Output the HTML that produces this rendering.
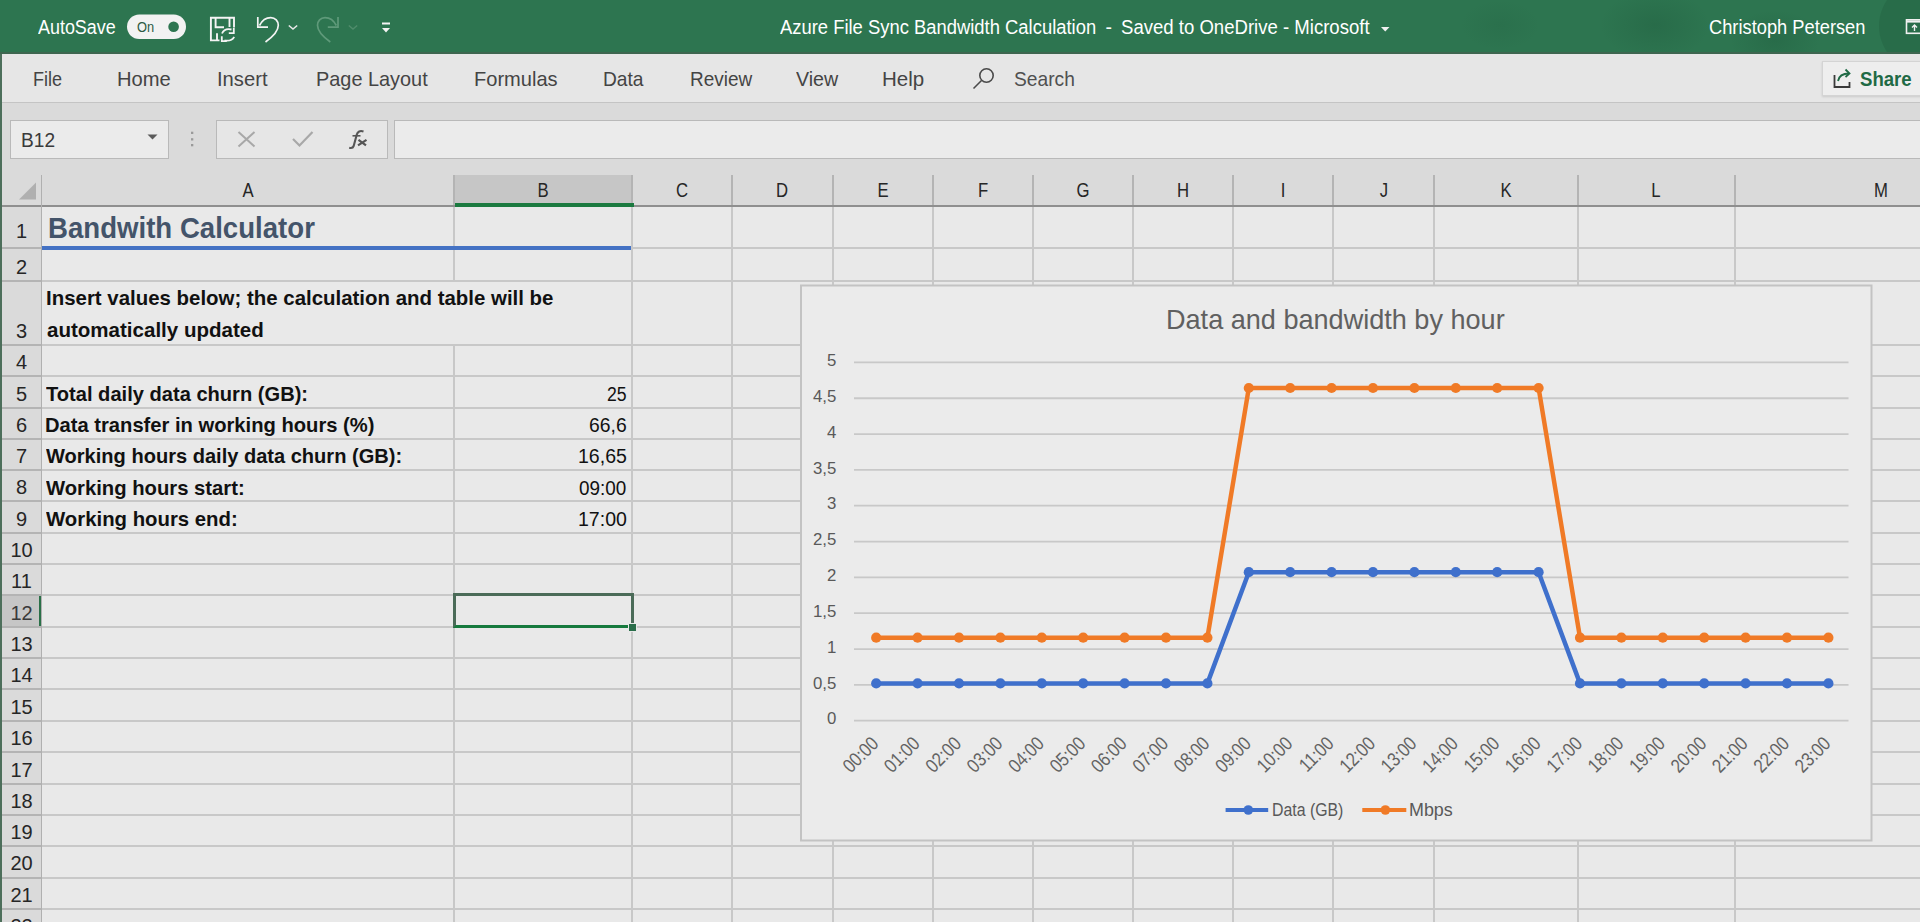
<!DOCTYPE html><html><head><meta charset="utf-8"><style>
html,body{margin:0;padding:0;}
body{width:1920px;height:922px;overflow:hidden;position:relative;background:#e9e9e9;font-family:"Liberation Sans",sans-serif;}
.a{position:absolute;}
.t{position:absolute;white-space:pre;line-height:1;transform-origin:0 0;}
</style></head><body>
<div class="a" style="left:0;top:0;width:1920px;height:53px;background:#2d7550"></div><div class="a" style="left:1440px;top:0;width:480px;height:52px;overflow:hidden"><div class="a" style="left:160px;top:-10px;width:110px;height:70px;border-radius:50%;background:radial-gradient(closest-side,rgba(20,70,45,0.2),rgba(20,70,45,0))"></div><div class="a" style="left:20px;top:0px;width:80px;height:50px;border-radius:50%;background:radial-gradient(closest-side,rgba(20,70,45,0.1),rgba(20,70,45,0))"></div><div class="a" style="left:290px;top:10px;width:90px;height:60px;border-radius:50%;background:radial-gradient(closest-side,rgba(20,70,45,0.2),rgba(20,70,45,0))"></div><div class="a" style="left:439px;top:-20px;width:92px;height:92px;border-radius:50%;background:rgba(20,60,40,0.16)"></div></div><div class="a" style="left:0;top:52px;width:1920px;height:2px;background:#3e6650"></div><div class="a" style="left:0;top:54px;width:2px;height:868px;background:#4d6f5b"></div><div class="a" style="left:2px;top:54px;width:1918px;height:48px;background:#e6e6e6"></div><div class="a" style="left:2px;top:102px;width:1918px;height:73px;background:#dadada"></div><div class="a" style="left:2px;top:102px;width:1918px;height:1px;background:#c4c4c4"></div><div class="a" style="left:10px;top:120px;width:157px;height:37px;background:#ebebeb;border:1px solid #b9b9b9"></div><div class="a" style="left:216px;top:120px;width:170px;height:37px;background:#e6e6e6;border:1px solid #b9b9b9"></div><div class="a" style="left:394px;top:120px;width:1530px;height:37px;background:#ebebeb;border:1px solid #b9b9b9"></div><div class="a" style="left:1822px;top:61px;width:110px;height:33px;background:#eeeeee;border:1px solid #d4d4d4;box-shadow:0 1px 2px rgba(0,0,0,0.12)"></div><div class="a" style="left:2px;top:175px;width:1918px;height:30px;background:#dadada"></div><div class="a" style="left:455px;top:175px;width:176px;height:30px;background:#c6c6c6"></div><div class="a" style="left:2px;top:207px;width:39px;height:715px;background:#dadada"></div><div class="a" style="left:2px;top:596px;width:39px;height:30px;background:#c6c6c6"></div><div class="a" style="left:39px;top:596px;width:3px;height:31px;background:#2a7048"></div><div class="a" style="left:453px;top:175px;width:2px;height:30px;background:#b4b4b4"></div><div class="a" style="left:631px;top:175px;width:2px;height:30px;background:#b4b4b4"></div><div class="a" style="left:731px;top:175px;width:2px;height:30px;background:#b4b4b4"></div><div class="a" style="left:832px;top:175px;width:2px;height:30px;background:#b4b4b4"></div><div class="a" style="left:932px;top:175px;width:2px;height:30px;background:#b4b4b4"></div><div class="a" style="left:1032px;top:175px;width:2px;height:30px;background:#b4b4b4"></div><div class="a" style="left:1132px;top:175px;width:2px;height:30px;background:#b4b4b4"></div><div class="a" style="left:1232px;top:175px;width:2px;height:30px;background:#b4b4b4"></div><div class="a" style="left:1332px;top:175px;width:2px;height:30px;background:#b4b4b4"></div><div class="a" style="left:1433px;top:175px;width:2px;height:30px;background:#b4b4b4"></div><div class="a" style="left:1577px;top:175px;width:2px;height:30px;background:#b4b4b4"></div><div class="a" style="left:1734px;top:175px;width:2px;height:30px;background:#b4b4b4"></div><div class="a" style="left:2px;top:205px;width:1918px;height:2px;background:#8f8f8f"></div><div class="a" style="left:455px;top:203px;width:179px;height:4px;background:#1b7a40"></div><div class="a" style="left:41px;top:175px;width:1px;height:747px;background:#b0b0b0"></div><div class="a" style="left:453px;top:207px;width:2px;height:715px;background:#c8c8c8"></div><div class="a" style="left:631px;top:207px;width:2px;height:715px;background:#c8c8c8"></div><div class="a" style="left:731px;top:207px;width:2px;height:715px;background:#c8c8c8"></div><div class="a" style="left:832px;top:207px;width:2px;height:715px;background:#c8c8c8"></div><div class="a" style="left:932px;top:207px;width:2px;height:715px;background:#c8c8c8"></div><div class="a" style="left:1032px;top:207px;width:2px;height:715px;background:#c8c8c8"></div><div class="a" style="left:1132px;top:207px;width:2px;height:715px;background:#c8c8c8"></div><div class="a" style="left:1232px;top:207px;width:2px;height:715px;background:#c8c8c8"></div><div class="a" style="left:1332px;top:207px;width:2px;height:715px;background:#c8c8c8"></div><div class="a" style="left:1433px;top:207px;width:2px;height:715px;background:#c8c8c8"></div><div class="a" style="left:1577px;top:207px;width:2px;height:715px;background:#c8c8c8"></div><div class="a" style="left:1734px;top:207px;width:2px;height:715px;background:#c8c8c8"></div><div class="a" style="left:2px;top:247px;width:39px;height:2px;background:#b4b4b4"></div><div class="a" style="left:631px;top:247px;width:1289px;height:2px;background:#c8c8c8"></div><div class="a" style="left:2px;top:280px;width:39px;height:2px;background:#b4b4b4"></div><div class="a" style="left:42px;top:280px;width:1878px;height:2px;background:#c8c8c8"></div><div class="a" style="left:2px;top:344px;width:39px;height:2px;background:#b4b4b4"></div><div class="a" style="left:42px;top:344px;width:1878px;height:2px;background:#c8c8c8"></div><div class="a" style="left:2px;top:375px;width:39px;height:2px;background:#b4b4b4"></div><div class="a" style="left:42px;top:375px;width:1878px;height:2px;background:#c8c8c8"></div><div class="a" style="left:2px;top:407px;width:39px;height:2px;background:#b4b4b4"></div><div class="a" style="left:42px;top:407px;width:1878px;height:2px;background:#c8c8c8"></div><div class="a" style="left:2px;top:438px;width:39px;height:2px;background:#b4b4b4"></div><div class="a" style="left:42px;top:438px;width:1878px;height:2px;background:#c8c8c8"></div><div class="a" style="left:2px;top:469px;width:39px;height:2px;background:#b4b4b4"></div><div class="a" style="left:42px;top:469px;width:1878px;height:2px;background:#c8c8c8"></div><div class="a" style="left:2px;top:500px;width:39px;height:2px;background:#b4b4b4"></div><div class="a" style="left:42px;top:500px;width:1878px;height:2px;background:#c8c8c8"></div><div class="a" style="left:2px;top:532px;width:39px;height:2px;background:#b4b4b4"></div><div class="a" style="left:42px;top:532px;width:1878px;height:2px;background:#c8c8c8"></div><div class="a" style="left:2px;top:563px;width:39px;height:2px;background:#b4b4b4"></div><div class="a" style="left:42px;top:563px;width:1878px;height:2px;background:#c8c8c8"></div><div class="a" style="left:2px;top:594px;width:39px;height:2px;background:#b4b4b4"></div><div class="a" style="left:42px;top:594px;width:1878px;height:2px;background:#c8c8c8"></div><div class="a" style="left:2px;top:626px;width:39px;height:2px;background:#b4b4b4"></div><div class="a" style="left:42px;top:626px;width:1878px;height:2px;background:#c8c8c8"></div><div class="a" style="left:2px;top:657px;width:39px;height:2px;background:#b4b4b4"></div><div class="a" style="left:42px;top:657px;width:1878px;height:2px;background:#c8c8c8"></div><div class="a" style="left:2px;top:688px;width:39px;height:2px;background:#b4b4b4"></div><div class="a" style="left:42px;top:688px;width:1878px;height:2px;background:#c8c8c8"></div><div class="a" style="left:2px;top:720px;width:39px;height:2px;background:#b4b4b4"></div><div class="a" style="left:42px;top:720px;width:1878px;height:2px;background:#c8c8c8"></div><div class="a" style="left:2px;top:751px;width:39px;height:2px;background:#b4b4b4"></div><div class="a" style="left:42px;top:751px;width:1878px;height:2px;background:#c8c8c8"></div><div class="a" style="left:2px;top:783px;width:39px;height:2px;background:#b4b4b4"></div><div class="a" style="left:42px;top:783px;width:1878px;height:2px;background:#c8c8c8"></div><div class="a" style="left:2px;top:814px;width:39px;height:2px;background:#b4b4b4"></div><div class="a" style="left:42px;top:814px;width:1878px;height:2px;background:#c8c8c8"></div><div class="a" style="left:2px;top:845px;width:39px;height:2px;background:#b4b4b4"></div><div class="a" style="left:42px;top:845px;width:1878px;height:2px;background:#c8c8c8"></div><div class="a" style="left:2px;top:877px;width:39px;height:2px;background:#b4b4b4"></div><div class="a" style="left:42px;top:877px;width:1878px;height:2px;background:#c8c8c8"></div><div class="a" style="left:2px;top:908px;width:39px;height:2px;background:#b4b4b4"></div><div class="a" style="left:42px;top:908px;width:1878px;height:2px;background:#c8c8c8"></div><div class="a" style="left:2px;top:939px;width:39px;height:2px;background:#b4b4b4"></div><div class="a" style="left:42px;top:939px;width:1878px;height:2px;background:#c8c8c8"></div><div class="a" style="left:453px;top:282px;width:2px;height:62px;background:#e9e9e9"></div><div class="a" style="left:42px;top:246px;width:589px;height:4px;background:#4472c4"></div><div class="a" style="left:453px;top:593px;width:175px;height:29px;border:3px solid #4b6b58;border-bottom-color:#177a3e"></div><div class="a" style="left:628px;top:623px;width:7px;height:7px;background:#2a6e4a;border:1px solid #e9e9e9"></div><div class="a" style="left:208.2px;top:181px;width:80px;text-align:center;font-size:19.9px;line-height:1;color:#262626;transform:scaleX(0.84)">A</div><div class="a" style="left:503.2px;top:181px;width:80px;text-align:center;font-size:19.9px;line-height:1;color:#262626;transform:scaleX(0.84)">B</div><div class="a" style="left:642.0px;top:181px;width:80px;text-align:center;font-size:19.9px;line-height:1;color:#262626;transform:scaleX(0.84)">C</div><div class="a" style="left:742.2px;top:181px;width:80px;text-align:center;font-size:19.9px;line-height:1;color:#262626;transform:scaleX(0.84)">D</div><div class="a" style="left:842.6px;top:181px;width:80px;text-align:center;font-size:19.9px;line-height:1;color:#262626;transform:scaleX(0.84)">E</div><div class="a" style="left:942.6px;top:181px;width:80px;text-align:center;font-size:19.9px;line-height:1;color:#262626;transform:scaleX(0.84)">F</div><div class="a" style="left:1042.7px;top:181px;width:80px;text-align:center;font-size:19.9px;line-height:1;color:#262626;transform:scaleX(0.84)">G</div><div class="a" style="left:1142.9px;top:181px;width:80px;text-align:center;font-size:19.9px;line-height:1;color:#262626;transform:scaleX(0.84)">H</div><div class="a" style="left:1243.2px;top:181px;width:80px;text-align:center;font-size:19.9px;line-height:1;color:#262626;transform:scaleX(0.84)">I</div><div class="a" style="left:1343.5px;top:181px;width:80px;text-align:center;font-size:19.9px;line-height:1;color:#262626;transform:scaleX(0.84)">J</div><div class="a" style="left:1465.9px;top:181px;width:80px;text-align:center;font-size:19.9px;line-height:1;color:#262626;transform:scaleX(0.84)">K</div><div class="a" style="left:1616.3px;top:181px;width:80px;text-align:center;font-size:19.9px;line-height:1;color:#262626;transform:scaleX(0.84)">L</div><div class="a" style="left:1840.8px;top:181px;width:80px;text-align:center;font-size:19.9px;line-height:1;color:#262626;transform:scaleX(0.84)">M</div><div class="a" style="left:1px;top:221px;width:41px;text-align:center;font-size:20.0px;line-height:1;color:#262626">1</div><div class="a" style="left:1px;top:257px;width:41px;text-align:center;font-size:20.0px;line-height:1;color:#262626">2</div><div class="a" style="left:1px;top:321px;width:41px;text-align:center;font-size:20.0px;line-height:1;color:#262626">3</div><div class="a" style="left:1px;top:352px;width:41px;text-align:center;font-size:20.0px;line-height:1;color:#262626">4</div><div class="a" style="left:1px;top:384px;width:41px;text-align:center;font-size:20.0px;line-height:1;color:#262626">5</div><div class="a" style="left:1px;top:415px;width:41px;text-align:center;font-size:20.0px;line-height:1;color:#262626">6</div><div class="a" style="left:1px;top:446px;width:41px;text-align:center;font-size:20.0px;line-height:1;color:#262626">7</div><div class="a" style="left:1px;top:477px;width:41px;text-align:center;font-size:20.0px;line-height:1;color:#262626">8</div><div class="a" style="left:1px;top:509px;width:41px;text-align:center;font-size:20.0px;line-height:1;color:#262626">9</div><div class="a" style="left:1px;top:540px;width:41px;text-align:center;font-size:20.0px;line-height:1;color:#262626">10</div><div class="a" style="left:1px;top:571px;width:41px;text-align:center;font-size:20.0px;line-height:1;color:#262626">11</div><div class="a" style="left:1px;top:603px;width:41px;text-align:center;font-size:20.0px;line-height:1;color:#3a3a3a">12</div><div class="a" style="left:1px;top:634px;width:41px;text-align:center;font-size:20.0px;line-height:1;color:#262626">13</div><div class="a" style="left:1px;top:665px;width:41px;text-align:center;font-size:20.0px;line-height:1;color:#262626">14</div><div class="a" style="left:1px;top:697px;width:41px;text-align:center;font-size:20.0px;line-height:1;color:#262626">15</div><div class="a" style="left:1px;top:728px;width:41px;text-align:center;font-size:20.0px;line-height:1;color:#262626">16</div><div class="a" style="left:1px;top:760px;width:41px;text-align:center;font-size:20.0px;line-height:1;color:#262626">17</div><div class="a" style="left:1px;top:791px;width:41px;text-align:center;font-size:20.0px;line-height:1;color:#262626">18</div><div class="a" style="left:1px;top:822px;width:41px;text-align:center;font-size:20.0px;line-height:1;color:#262626">19</div><div class="a" style="left:1px;top:853px;width:41px;text-align:center;font-size:20.0px;line-height:1;color:#262626">20</div><div class="a" style="left:1px;top:885px;width:41px;text-align:center;font-size:20.0px;line-height:1;color:#262626">21</div><div class="a" style="left:1px;top:916px;width:41px;text-align:center;font-size:20.0px;line-height:1;color:#262626">22</div><svg class="a" style="left:0;top:0" width="1920" height="922" viewBox="0 0 1920 922"><rect x="801" y="285.5" width="1070.5" height="555" fill="#ebebeb" stroke="#c3c3c3" stroke-width="2"/><line x1="854" y1="720.70" x2="1848.5" y2="720.70" stroke="#c8c8c8" stroke-width="1.8"/><line x1="854" y1="684.87" x2="1848.5" y2="684.87" stroke="#c8c8c8" stroke-width="1.8"/><line x1="854" y1="649.04" x2="1848.5" y2="649.04" stroke="#c8c8c8" stroke-width="1.8"/><line x1="854" y1="613.21" x2="1848.5" y2="613.21" stroke="#c8c8c8" stroke-width="1.8"/><line x1="854" y1="577.38" x2="1848.5" y2="577.38" stroke="#c8c8c8" stroke-width="1.8"/><line x1="854" y1="541.55" x2="1848.5" y2="541.55" stroke="#c8c8c8" stroke-width="1.8"/><line x1="854" y1="505.72" x2="1848.5" y2="505.72" stroke="#c8c8c8" stroke-width="1.8"/><line x1="854" y1="469.89" x2="1848.5" y2="469.89" stroke="#c8c8c8" stroke-width="1.8"/><line x1="854" y1="434.06" x2="1848.5" y2="434.06" stroke="#c8c8c8" stroke-width="1.8"/><line x1="854" y1="398.23" x2="1848.5" y2="398.23" stroke="#c8c8c8" stroke-width="1.8"/><line x1="854" y1="362.40" x2="1848.5" y2="362.40" stroke="#c8c8c8" stroke-width="1.8"/><polyline points="876.2,683.4 917.6,683.4 959.0,683.4 1000.4,683.4 1041.8,683.4 1083.2,683.4 1124.6,683.4 1166.0,683.4 1207.4,683.4 1248.8,572.2 1290.2,572.2 1331.6,572.2 1373.0,572.2 1414.4,572.2 1455.8,572.2 1497.2,572.2 1538.6,572.2 1580.0,683.4 1621.4,683.4 1662.8,683.4 1704.2,683.4 1745.6,683.4 1787.0,683.4 1828.4,683.4" fill="none" stroke="#3f70cc" stroke-width="4.5" stroke-linejoin="round"/><circle cx="876.2" cy="683.4" r="5.1" fill="#3f70cc"/><circle cx="917.6" cy="683.4" r="5.1" fill="#3f70cc"/><circle cx="959.0" cy="683.4" r="5.1" fill="#3f70cc"/><circle cx="1000.4" cy="683.4" r="5.1" fill="#3f70cc"/><circle cx="1041.8" cy="683.4" r="5.1" fill="#3f70cc"/><circle cx="1083.2" cy="683.4" r="5.1" fill="#3f70cc"/><circle cx="1124.6" cy="683.4" r="5.1" fill="#3f70cc"/><circle cx="1166.0" cy="683.4" r="5.1" fill="#3f70cc"/><circle cx="1207.4" cy="683.4" r="5.1" fill="#3f70cc"/><circle cx="1248.8" cy="572.2" r="5.1" fill="#3f70cc"/><circle cx="1290.2" cy="572.2" r="5.1" fill="#3f70cc"/><circle cx="1331.6" cy="572.2" r="5.1" fill="#3f70cc"/><circle cx="1373.0" cy="572.2" r="5.1" fill="#3f70cc"/><circle cx="1414.4" cy="572.2" r="5.1" fill="#3f70cc"/><circle cx="1455.8" cy="572.2" r="5.1" fill="#3f70cc"/><circle cx="1497.2" cy="572.2" r="5.1" fill="#3f70cc"/><circle cx="1538.6" cy="572.2" r="5.1" fill="#3f70cc"/><circle cx="1580.0" cy="683.4" r="5.1" fill="#3f70cc"/><circle cx="1621.4" cy="683.4" r="5.1" fill="#3f70cc"/><circle cx="1662.8" cy="683.4" r="5.1" fill="#3f70cc"/><circle cx="1704.2" cy="683.4" r="5.1" fill="#3f70cc"/><circle cx="1745.6" cy="683.4" r="5.1" fill="#3f70cc"/><circle cx="1787.0" cy="683.4" r="5.1" fill="#3f70cc"/><circle cx="1828.4" cy="683.4" r="5.1" fill="#3f70cc"/><polyline points="876.2,637.7 917.6,637.7 959.0,637.7 1000.4,637.7 1041.8,637.7 1083.2,637.7 1124.6,637.7 1166.0,637.7 1207.4,637.7 1248.8,388.0 1290.2,388.0 1331.6,388.0 1373.0,388.0 1414.4,388.0 1455.8,388.0 1497.2,388.0 1538.6,388.0 1580.0,637.7 1621.4,637.7 1662.8,637.7 1704.2,637.7 1745.6,637.7 1787.0,637.7 1828.4,637.7" fill="none" stroke="#f07a26" stroke-width="4.5" stroke-linejoin="round"/><circle cx="876.2" cy="637.7" r="5.1" fill="#f07a26"/><circle cx="917.6" cy="637.7" r="5.1" fill="#f07a26"/><circle cx="959.0" cy="637.7" r="5.1" fill="#f07a26"/><circle cx="1000.4" cy="637.7" r="5.1" fill="#f07a26"/><circle cx="1041.8" cy="637.7" r="5.1" fill="#f07a26"/><circle cx="1083.2" cy="637.7" r="5.1" fill="#f07a26"/><circle cx="1124.6" cy="637.7" r="5.1" fill="#f07a26"/><circle cx="1166.0" cy="637.7" r="5.1" fill="#f07a26"/><circle cx="1207.4" cy="637.7" r="5.1" fill="#f07a26"/><circle cx="1248.8" cy="388.0" r="5.1" fill="#f07a26"/><circle cx="1290.2" cy="388.0" r="5.1" fill="#f07a26"/><circle cx="1331.6" cy="388.0" r="5.1" fill="#f07a26"/><circle cx="1373.0" cy="388.0" r="5.1" fill="#f07a26"/><circle cx="1414.4" cy="388.0" r="5.1" fill="#f07a26"/><circle cx="1455.8" cy="388.0" r="5.1" fill="#f07a26"/><circle cx="1497.2" cy="388.0" r="5.1" fill="#f07a26"/><circle cx="1538.6" cy="388.0" r="5.1" fill="#f07a26"/><circle cx="1580.0" cy="637.7" r="5.1" fill="#f07a26"/><circle cx="1621.4" cy="637.7" r="5.1" fill="#f07a26"/><circle cx="1662.8" cy="637.7" r="5.1" fill="#f07a26"/><circle cx="1704.2" cy="637.7" r="5.1" fill="#f07a26"/><circle cx="1745.6" cy="637.7" r="5.1" fill="#f07a26"/><circle cx="1787.0" cy="637.7" r="5.1" fill="#f07a26"/><circle cx="1828.4" cy="637.7" r="5.1" fill="#f07a26"/><line x1="1225.6" y1="810" x2="1268.2" y2="810" stroke="#3f70cc" stroke-width="4"/><circle cx="1248.3" cy="810" r="4.8" fill="#3f70cc"/><line x1="1362.3" y1="810" x2="1406.3" y2="810" stroke="#f07a26" stroke-width="4"/><circle cx="1385.4" cy="810" r="4.8" fill="#f07a26"/><text x="836.3" y="724.3" text-anchor="end" font-family="Liberation Sans" font-size="16.8" fill="#595959">0</text><text x="836.3" y="688.5" text-anchor="end" font-family="Liberation Sans" font-size="16.8" fill="#595959">0,5</text><text x="836.3" y="652.6" text-anchor="end" font-family="Liberation Sans" font-size="16.8" fill="#595959">1</text><text x="836.3" y="616.8" text-anchor="end" font-family="Liberation Sans" font-size="16.8" fill="#595959">1,5</text><text x="836.3" y="581.0" text-anchor="end" font-family="Liberation Sans" font-size="16.8" fill="#595959">2</text><text x="836.3" y="545.2" text-anchor="end" font-family="Liberation Sans" font-size="16.8" fill="#595959">2,5</text><text x="836.3" y="509.3" text-anchor="end" font-family="Liberation Sans" font-size="16.8" fill="#595959">3</text><text x="836.3" y="473.5" text-anchor="end" font-family="Liberation Sans" font-size="16.8" fill="#595959">3,5</text><text x="836.3" y="437.7" text-anchor="end" font-family="Liberation Sans" font-size="16.8" fill="#595959">4</text><text x="836.3" y="401.8" text-anchor="end" font-family="Liberation Sans" font-size="16.8" fill="#595959">4,5</text><text x="836.3" y="366.0" text-anchor="end" font-family="Liberation Sans" font-size="16.8" fill="#595959">5</text><text transform="translate(879.6,744.8) rotate(-45) scale(0.84,1)" text-anchor="end" font-family="Liberation Sans" font-size="19.5" fill="#636363">00:00</text><text transform="translate(921.0,744.8) rotate(-45) scale(0.84,1)" text-anchor="end" font-family="Liberation Sans" font-size="19.5" fill="#636363">01:00</text><text transform="translate(962.4,744.8) rotate(-45) scale(0.84,1)" text-anchor="end" font-family="Liberation Sans" font-size="19.5" fill="#636363">02:00</text><text transform="translate(1003.8,744.8) rotate(-45) scale(0.84,1)" text-anchor="end" font-family="Liberation Sans" font-size="19.5" fill="#636363">03:00</text><text transform="translate(1045.2,744.8) rotate(-45) scale(0.84,1)" text-anchor="end" font-family="Liberation Sans" font-size="19.5" fill="#636363">04:00</text><text transform="translate(1086.6,744.8) rotate(-45) scale(0.84,1)" text-anchor="end" font-family="Liberation Sans" font-size="19.5" fill="#636363">05:00</text><text transform="translate(1128.0,744.8) rotate(-45) scale(0.84,1)" text-anchor="end" font-family="Liberation Sans" font-size="19.5" fill="#636363">06:00</text><text transform="translate(1169.4,744.8) rotate(-45) scale(0.84,1)" text-anchor="end" font-family="Liberation Sans" font-size="19.5" fill="#636363">07:00</text><text transform="translate(1210.8,744.8) rotate(-45) scale(0.84,1)" text-anchor="end" font-family="Liberation Sans" font-size="19.5" fill="#636363">08:00</text><text transform="translate(1252.2,744.8) rotate(-45) scale(0.84,1)" text-anchor="end" font-family="Liberation Sans" font-size="19.5" fill="#636363">09:00</text><text transform="translate(1293.6,744.8) rotate(-45) scale(0.84,1)" text-anchor="end" font-family="Liberation Sans" font-size="19.5" fill="#636363">10:00</text><text transform="translate(1335.0,744.8) rotate(-45) scale(0.84,1)" text-anchor="end" font-family="Liberation Sans" font-size="19.5" fill="#636363">11:00</text><text transform="translate(1376.4,744.8) rotate(-45) scale(0.84,1)" text-anchor="end" font-family="Liberation Sans" font-size="19.5" fill="#636363">12:00</text><text transform="translate(1417.8,744.8) rotate(-45) scale(0.84,1)" text-anchor="end" font-family="Liberation Sans" font-size="19.5" fill="#636363">13:00</text><text transform="translate(1459.2,744.8) rotate(-45) scale(0.84,1)" text-anchor="end" font-family="Liberation Sans" font-size="19.5" fill="#636363">14:00</text><text transform="translate(1500.6,744.8) rotate(-45) scale(0.84,1)" text-anchor="end" font-family="Liberation Sans" font-size="19.5" fill="#636363">15:00</text><text transform="translate(1542.0,744.8) rotate(-45) scale(0.84,1)" text-anchor="end" font-family="Liberation Sans" font-size="19.5" fill="#636363">16:00</text><text transform="translate(1583.4,744.8) rotate(-45) scale(0.84,1)" text-anchor="end" font-family="Liberation Sans" font-size="19.5" fill="#636363">17:00</text><text transform="translate(1624.8,744.8) rotate(-45) scale(0.84,1)" text-anchor="end" font-family="Liberation Sans" font-size="19.5" fill="#636363">18:00</text><text transform="translate(1666.2,744.8) rotate(-45) scale(0.84,1)" text-anchor="end" font-family="Liberation Sans" font-size="19.5" fill="#636363">19:00</text><text transform="translate(1707.6,744.8) rotate(-45) scale(0.84,1)" text-anchor="end" font-family="Liberation Sans" font-size="19.5" fill="#636363">20:00</text><text transform="translate(1749.0,744.8) rotate(-45) scale(0.84,1)" text-anchor="end" font-family="Liberation Sans" font-size="19.5" fill="#636363">21:00</text><text transform="translate(1790.4,744.8) rotate(-45) scale(0.84,1)" text-anchor="end" font-family="Liberation Sans" font-size="19.5" fill="#636363">22:00</text><text transform="translate(1831.8,744.8) rotate(-45) scale(0.84,1)" text-anchor="end" font-family="Liberation Sans" font-size="19.5" fill="#636363">23:00</text></svg><svg class="a" style="left:0;top:0" width="1920" height="210" viewBox="0 0 1920 210"><rect x="127" y="14.5" width="59" height="24.5" rx="12.25" fill="#f2f2f2"/><circle cx="173.6" cy="26.8" r="5.3" fill="#2d7550"/><text x="137" y="32" font-family="Liberation Sans" font-size="14" fill="#2d5a44" transform="translate(136.5,0) scale(0.92,1) translate(-136.5,0)">On</text><g fill="none" stroke="#f4f4f4" stroke-width="1.9"><path d="M219.5 40.4 H210.9 V17.8 H234 V27.5"/><path d="M215.6 17.8 V27.2 H224"/><path d="M229.5 17.8 V27"/><path d="M217 33.2 V40.4"/></g><g fill="none" stroke="#f4f4f4" stroke-width="1.8"><path d="M222 33.5 C223.5 30 227 28.5 231.5 29.5"/><path d="M233.8 28 V33.2 H228.8"/><path d="M234.2 36.8 C232.5 40 229 41.2 224.5 40.5"/><path d="M221.8 36.2 V41.2 H226.8"/></g><g fill="none" stroke="#f4f4f4" stroke-width="1.7"><path d="M257.8 17 V27.2 H268"/><path d="M259.5 25.5 C262 20.5 266 17.6 270.8 17.6 C275.3 17.6 278.3 21.3 278.3 25.3 C278.3 31 272.5 37 265.5 42"/></g><path d="M288.8 25.5 L293 29 L297.2 25.5" fill="none" stroke="#e8e8e8" stroke-width="1.6"/><g fill="none" stroke="#5f9a7a" stroke-width="1.7"><path d="M338 17 V27.2 H327.8"/><path d="M336.3 25.5 C333.8 20.5 329.8 17.6 325 17.6 C320.5 17.6 317.5 21.3 317.5 25.3 C317.5 31 323.3 37 330.3 42"/></g><path d="M348.8 25.5 L353 29 L357.2 25.5" fill="none" stroke="#4f8c6b" stroke-width="1.5"/><rect x="382" y="22.5" width="8" height="2" fill="#f4f4f4"/><path d="M382 28 H390 L386 32.5 Z" fill="#f4f4f4"/><path d="M1381 27 H1389.5 L1385.25 31.5 Z" fill="#f0f0f0"/><rect x="1906.5" y="19.8" width="16" height="13.5" fill="none" stroke="#f0f0f0" stroke-width="1.6"/><path d="M1906 21.5 H1922" stroke="#f0f0f0" stroke-width="2.2"/><path d="M1914.5 31 V25 M1912 27.5 L1914.5 25 L1917 27.5" fill="none" stroke="#f0f0f0" stroke-width="1.4"/><g fill="none" stroke="#4a4a4a" stroke-width="1.6"><circle cx="986.5" cy="75.5" r="6.7"/><path d="M981.5 80.5 L973.5 88.5"/></g><g fill="none" stroke="#3a3a3a" stroke-width="1.8"><path d="M1834.5 75 V87 H1849.5 V82"/></g><g fill="none" stroke="#1f6a45" stroke-width="1.8"><path d="M1838 81 C1839 75.5 1843 73.5 1849 73.5"/><path d="M1845.5 69.5 L1849.5 73.5 L1845.5 77"/></g><path d="M147.5 134.5 H157.5 L152.5 139.5 Z" fill="#5a5a5a"/><rect x="191" y="131.7" width="2.3" height="2.3" fill="#9a9a9a"/><rect x="191" y="138.2" width="2.3" height="2.3" fill="#9a9a9a"/><rect x="191" y="144.0" width="2.3" height="2.3" fill="#9a9a9a"/><path d="M238.5 132 L254.5 146.5 M254.5 132 L238.5 146.5" stroke="#a8a8a8" stroke-width="2"/><path d="M293 139 L299.5 145.5 L312.5 132" fill="none" stroke="#a8a8a8" stroke-width="2.2"/><g fill="none" stroke="#555" stroke-linecap="butt"><path d="M363.5 131.5 C360 130.3 357.6 131.5 356.8 134.5 L353.6 146.2 C353 148 351.5 148.4 349.2 147.8" stroke-width="2.1"/><path d="M352.5 135.8 H360.5" stroke-width="1.6"/><path d="M358.5 139.8 L366 145.3 M366.5 139.8 L358 145.3" stroke-width="2.2"/></g><path d="M36 182.5 V199.5 H19 Z" fill="#b0b0b0"/></svg><span class="t" style="left:38.20px;top:17.00px;font-size:20.00px;font-weight:400;color:#ffffff;transform:scaleX(0.8960);">AutoSave</span>
<span class="t" style="left:780.30px;top:17.00px;font-size:20.00px;font-weight:400;color:#ffffff;transform:scaleX(0.9203);">Azure File Sync Bandwidth Calculation</span>
<span class="t" style="left:1105.50px;top:18.00px;font-size:19.40px;font-weight:400;color:#ffffff;transform:scaleX(1.0000);">-</span>
<span class="t" style="left:1121.00px;top:17.00px;font-size:20.00px;font-weight:400;color:#ffffff;transform:scaleX(0.9280);">Saved to OneDrive - Microsoft</span>
<span class="t" style="left:1708.89px;top:17.00px;font-size:20.00px;font-weight:400;color:#ffffff;transform:scaleX(0.9138);">Christoph Petersen</span>
<span class="t" style="left:32.60px;top:69.00px;font-size:20.14px;font-weight:400;color:#444444;transform:scaleX(0.8964);">File</span>
<span class="t" style="left:117.40px;top:69.00px;font-size:20.14px;font-weight:400;color:#444444;transform:scaleX(1.0021);">Home</span>
<span class="t" style="left:217.00px;top:69.00px;font-size:20.14px;font-weight:400;color:#444444;transform:scaleX(1.0032);">Insert</span>
<span class="t" style="left:315.91px;top:69.00px;font-size:20.14px;font-weight:400;color:#444444;transform:scaleX(0.9882);">Page Layout</span>
<span class="t" style="left:473.80px;top:69.00px;font-size:20.14px;font-weight:400;color:#444444;transform:scaleX(0.9975);">Formulas</span>
<span class="t" style="left:603.45px;top:69.00px;font-size:20.14px;font-weight:400;color:#444444;transform:scaleX(0.9523);">Data</span>
<span class="t" style="left:690.36px;top:69.00px;font-size:20.14px;font-weight:400;color:#444444;transform:scaleX(0.9427);">Review</span>
<span class="t" style="left:796.30px;top:69.00px;font-size:20.14px;font-weight:400;color:#444444;transform:scaleX(0.9766);">View</span>
<span class="t" style="left:882.18px;top:69.00px;font-size:20.14px;font-weight:400;color:#444444;transform:scaleX(1.0200);">Help</span>
<span class="t" style="left:1013.80px;top:69.00px;font-size:20.14px;font-weight:400;color:#505050;transform:scaleX(0.9541);">Search</span>
<span class="t" style="left:1859.90px;top:70.00px;font-size:19.86px;font-weight:700;color:#1f6a45;transform:scaleX(0.9362);">Share</span>
<span class="t" style="left:21.14px;top:131.00px;font-size:19.86px;font-weight:400;color:#3a3a3a;transform:scaleX(0.9629);">B12</span>
<span class="t" style="left:48.24px;top:214.00px;font-size:28.70px;font-weight:700;color:#44546a;transform:scaleX(0.9624);">Bandwith Calculator</span>
<span class="t" style="left:45.97px;top:289.00px;font-size:19.86px;font-weight:700;color:#111111;transform:scaleX(1.0287);">Insert values below; the calculation and table will be</span>
<span class="t" style="left:46.50px;top:321.00px;font-size:19.86px;font-weight:700;color:#111111;transform:scaleX(1.0337);">automatically updated</span>
<span class="t" style="left:46.00px;top:385.00px;font-size:19.86px;font-weight:700;color:#111111;transform:scaleX(1.0120);">Total daily data churn (GB):</span>
<span class="t" style="left:44.98px;top:416.00px;font-size:19.86px;font-weight:700;color:#111111;transform:scaleX(1.0154);">Data transfer in working hours (%)</span>
<span class="t" style="left:46.00px;top:447.00px;font-size:19.86px;font-weight:700;color:#111111;transform:scaleX(1.0096);">Working hours daily data churn (GB):</span>
<span class="t" style="left:46.00px;top:479.00px;font-size:19.86px;font-weight:700;color:#111111;transform:scaleX(1.0193);">Working hours start:</span>
<span class="t" style="left:46.00px;top:510.00px;font-size:19.86px;font-weight:700;color:#111111;transform:scaleX(1.0241);">Working hours end:</span>
<span class="t" style="left:606.71px;top:385.00px;font-size:19.86px;font-weight:400;color:#111111;transform:scaleX(0.8889);">25</span>
<span class="t" style="left:588.73px;top:416.00px;font-size:19.86px;font-weight:400;color:#111111;transform:scaleX(0.9738);">66,6</span>
<span class="t" style="left:577.52px;top:447.00px;font-size:19.86px;font-weight:400;color:#111111;transform:scaleX(0.9831);">16,65</span>
<span class="t" style="left:579.10px;top:479.00px;font-size:19.86px;font-weight:400;color:#111111;transform:scaleX(0.9512);">09:00</span>
<span class="t" style="left:577.52px;top:510.00px;font-size:19.86px;font-weight:400;color:#111111;transform:scaleX(0.9831);">17:00</span>
<span class="t" style="left:1165.99px;top:307.00px;font-size:26.96px;font-weight:400;color:#606060;transform:scaleX(1.0045);">Data and bandwidth by hour</span>
<span class="t" style="left:1271.62px;top:801.00px;font-size:18.12px;font-weight:400;color:#595959;transform:scaleX(0.8757);">Data (GB)</span>
<span class="t" style="left:1408.71px;top:801.00px;font-size:18.12px;font-weight:400;color:#595959;transform:scaleX(0.9878);">Mbps</span>
</body></html>
